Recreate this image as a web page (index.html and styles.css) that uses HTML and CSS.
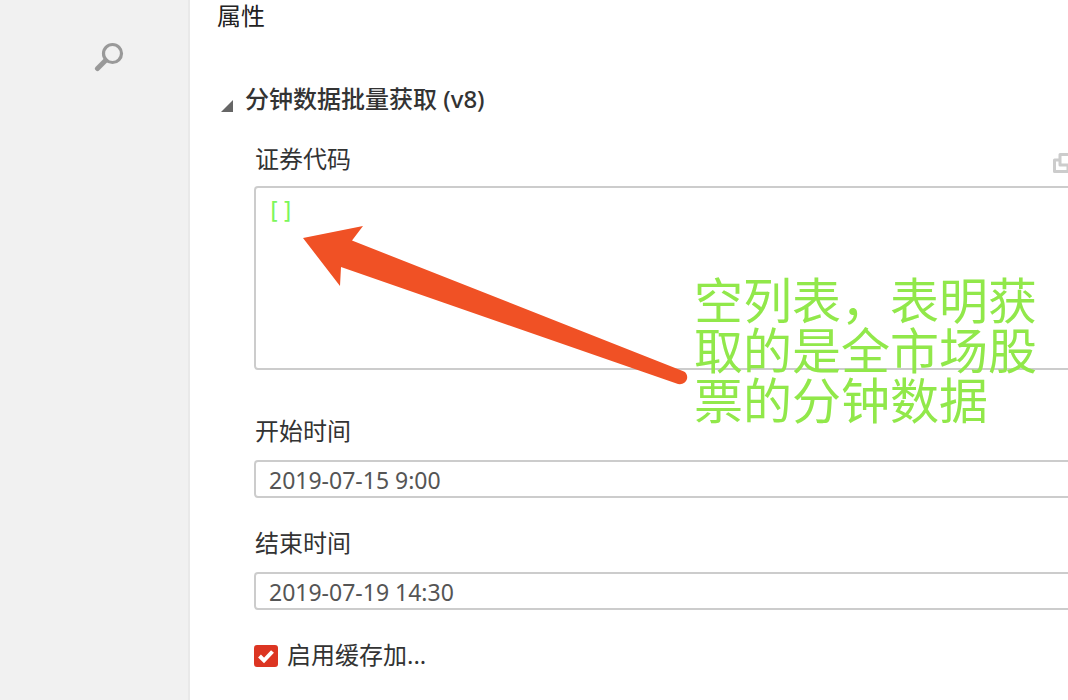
FILE: index.html
```html
<!DOCTYPE html>
<html lang="zh-CN">
<head>
<meta charset="utf-8">
<title>属性</title>
<link rel="stylesheet" href="styles.css">
</head>
<body>
<div class="app">
  <aside class="sidebar">
    <button class="search" type="button" aria-label="搜索">
      <svg width="30" height="30" viewBox="0 0 30 30" fill="none" stroke="#999" aria-hidden="true">
        <circle cx="18.500" cy="11.500" r="9" stroke-width="3.200"/>
        <path d="M11.500 18.500 3.500 26.500" stroke-width="5" stroke-linecap="round"/>
      </svg>
    </button>
  </aside>
  <main class="panel">
    <h1 class="title">属性</h1>
    <section class="module">
      <h2 class="heading">
        <svg class="caret" width="12" height="12" viewBox="0 0 12 12" aria-hidden="true"><path d="M12 0V12H0Z" fill="#666"/></svg>
        <span>分钟数据批量获取 (v8)</span>
      </h2>
      <div class="fields">
        <div class="field field-code">
          <div class="label-row">
            <label class="label" for="codes">证券代码</label>
            <button class="expand" type="button" aria-label="展开">
              <svg width="24" height="22" viewBox="0 0 24 22" fill="none" stroke="#ccc" stroke-width="3" stroke-linejoin="round" aria-hidden="true">
                <path d="M8 8H2.500V19.500H16V14"/>
                <rect x="8" y="2.500" width="14" height="10.500"/>
              </svg>
            </button>
          </div>
          <div class="editor">
            <textarea id="codes" class="code" spellcheck="false">[]</textarea>
            <svg class="arrow" width="386" height="160" viewBox="0 0 386 160" aria-hidden="true">
              <path d="M0 12 60 0 49 14.500 381 145.500Q385 148 384 153Q382 159 375 158L38 41 37 60Z" fill="#f05125"/>
            </svg>
            <p class="note">空列表，表明获<br>取的是全市场股<br>票的分钟数据</p>
          </div>
        </div>
        <div class="field">
          <label class="label" for="start">开始时间</label>
          <input id="start" class="text" type="text" value="2019-07-15 9:00">
        </div>
        <div class="field">
          <label class="label" for="end">结束时间</label>
          <input id="end" class="text" type="text" value="2019-07-19 14:30">
        </div>
        <div class="check-row">
          <input id="cache" class="check" type="checkbox" checked>
          <label for="cache">启用缓存加...</label>
        </div>
      </div>
    </section>
  </main>
</div>
</body>
</html>
```

FILE: styles.css
```css
* {
  box-sizing: border-box;
}

body {
  margin: 0;
  overflow: hidden;
  background: #fff;
  color: #333;
  font: 24px/36px "Noto Sans", "Noto Sans CJK SC", sans-serif;
}

button {
  display: block;
  padding: 0;
  border: 0;
  background: none;
}

svg {
  display: block;
}

.app {
  display: flex;
  min-height: 100vh;
}

.sidebar {
  flex: none;
  width: 190px;
  padding: 42px 0 0 94px;
  background: #f1f1f1;
  border-right: 2px solid #e9e9e9;
}

.panel {
  flex: 1;
  min-width: 0;
  padding-left: 26px;
}

.title {
  margin: 0;
  padding-left: 1px;
  color: #222;
  font-size: 24px;
  font-weight: 400;
  line-height: 32px;
}

.heading {
  display: flex;
  align-items: center;
  gap: 12px;
  margin: 49px 0 0;
  padding-left: 5px;
  font-size: 24px;
  font-weight: 500;
  line-height: 36px;
}

.caret {
  margin-top: 14px;
}

.fields {
  padding: 24px 0 0 38px;
}

.field {
  display: flex;
  flex-direction: column;
  gap: 11px;
  margin-bottom: 27px;
}

.field-code {
  gap: 9px;
  margin-bottom: 43px;
}

.label {
  padding-left: 1px;
}

.label-row {
  display: flex;
  justify-content: space-between;
  align-items: center;
}

.expand {
  margin: 8px -8px 0 0;
}

.editor {
  position: relative;
  height: 184px;
  margin-right: -16px;
}

.code,
.text {
  display: block;
  width: 100%;
  margin: 0;
  border: 2px solid #ccc;
  border-radius: 4px;
  background: #fff;
  outline: 0;
}

.code {
  height: 100%;
  padding: 8px 11px;
  resize: none;
  color: #7cf65a;
  font: 23px/30px "DejaVu Sans Mono", monospace;
}

.text {
  width: calc(100% + 16px);
  height: 38px;
  padding: 2px 13px 0;
  color: #555;
  font: 23px/32px "Noto Sans", sans-serif;
}

.arrow {
  position: absolute;
  top: 40px;
  left: 49px;
}

.note {
  position: absolute;
  top: 87px;
  left: 440px;
  margin: 0;
  color: #91e84a;
  font: 49px/50px "Noto Sans CJK SC", sans-serif;
  white-space: nowrap;
}

.check-row {
  display: flex;
  align-items: center;
  gap: 9px;
}

.check {
  appearance: none;
  width: 24px;
  height: 22px;
  margin: 2px 0 0;
  border-radius: 3px;
  background: #dc3522 url("data:image/svg+xml,%3Csvg xmlns='http://www.w3.org/2000/svg' viewBox='0 0 24 22'%3E%3Cpath d='M5.500 11 10 15.500 18.500 6.500' fill='none' stroke='%23fff' stroke-width='4'/%3E%3C/svg%3E") center / 100% 100% no-repeat;
}
```
